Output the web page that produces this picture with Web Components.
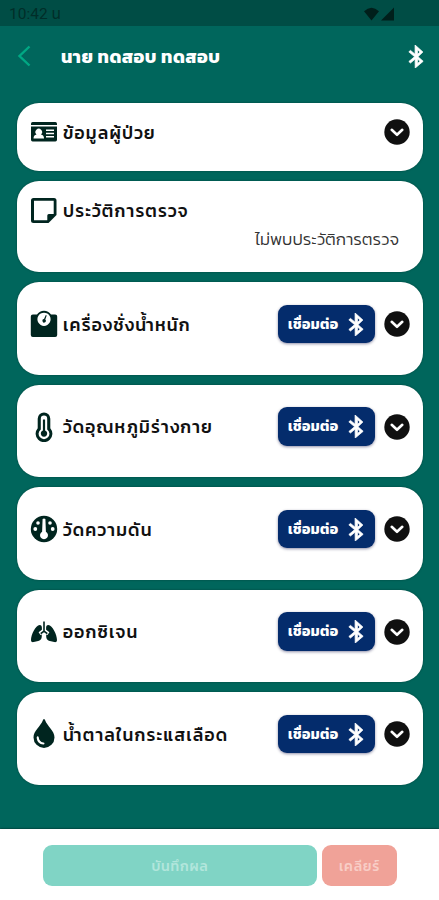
<!DOCTYPE html>
<html lang="th">
<head>
<meta charset="utf-8">
<meta name="viewport" content="width=device-width, initial-scale=1">
<title>Patient</title>
<style>
  body {
    margin: 0;
    font-family: "Kanit", "Noto Sans Thai", "Noto Sans", "Roboto", sans-serif;
  }
</style>
</head>
<body>
<patient-app></patient-app>

<script>
const ICONS = {
  id: `<path fill-rule="evenodd" d="M1 6.700q0-1.700 1.600-1.700h22.800q1.600 0 1.600 1.700v1.300H1zM1 9.500h26v13.300q0 1.700-1.600 1.700H2.600Q1 24.500 1 22.800zM3.500 21.500h10.500q0-3.700-3-4.100a3.300 3.300 0 1 0-4.500 0q-3 .4-3 4.100zM16 12.500v1.600h8v-1.600zM16 15.700v1.600h8v-1.600zM16 18.900v1.600h8v-1.600z"/>`,
  note: `<path fill-rule="evenodd" d="M3.500 2h20.500q2.500 0 2.500 2.500v14.500l-8 8h-15q-2.500 0-2.500-2.500v-20q0-2.500 2.500-2.500zM4 4.800v19.400h13.300v-4.700q0-1.500 1.500-1.500h4.900v-13.200z"/>`,
  scale: `<path fill-rule="evenodd" d="M2.800 5.500h4.200a8.500 8.500 0 0 1 14 0h4.200q2 0 2 2v18.500q0 2-2 2h-22.400q-2 0-2-2v-18.500q0-2 2-2zM14 3.700a6.600 6.600 0 1 0 .01 0z"/><path d="M15.800 6l.9.400-1.400 4.100a1.700 1.700 0 1 1-1.300-.4z"/>`,
  thermometer: `<path fill-rule="evenodd" d="M14 .5a6.300 6.300 0 0 1 6.300 6.300v9.400a8.400 8.400 0 1 1-12.600 0V6.800A6.300 6.300 0 0 1 14 .500zM14 3.600a3.200 3.200 0 0 0-3.200 3.200v10.600a5.400 5.400 0 1 0 6.400 0V6.800A3.200 3.200 0 0 0 14 3.600z"/><path d="M12.900 8q1.100-1.500 2.200 0v10.500a3.200 3.200 0 1 1-2.200 0z"/>`,
  gauge: `<circle cx="14" cy="15" r="13.200"/><g fill="#fff"><path d="M12.600 5q1.400-1.200 2.800 0l.5 12.700a4 4 0 1 1-3.800 0z"/><circle cx="8" cy="9" r="1.800"/><circle cx="20" cy="9" r="1.800"/><circle cx="5.300" cy="15" r="1.900"/><circle cx="22.700" cy="15" r="1.900"/></g>`,
  lungs: `<path d="M13.200 4.500h1.600v9.300l3 2.100-1 1.300-2.800-2-2.800 2-1-1.300 3-2.100zM9.700 8c1.600 0 2.200 1.200 2.200 2.700v2l-3.300 2.600 1.900 2.800 1.200-.7c.5 4-.9 5.900-3.600 6.500l-4.300 1.200C2.200 25.500 1 24.800 1 23c0-5 4.500-15 8.700-15zM18.300 8c-1.600 0-2.200 1.200-2.200 2.700v2l3.300 2.600-1.900 2.800-1.200-.7c-.5 4 .9 5.900 3.600 6.500l4.300 1.200c1.600.4 2.800-.3 2.800-2.100 0-5-4.500-15-8.700-15z"/>`,
  drop: `<path fill-rule="evenodd" d="M13 1q1-2 2 0c2.500 6.600 9.500 10.900 9.500 17.400a10.500 10.500 0 0 1-21 0c0-6.500 7-10.800 9.500-17.400zM6.700 18.200c0 4.500 3 7 6.600 7.300q1.200 0 1.200-1t-1.200-1.100c-2.600-.3-4.400-2.300-4.600-5.200q-.2-1-1-1t-1 1z"/>`
};

const BLUETOOTH = "M196.500 260l92.600-103.300L143.100 0v206.300l-86.100-86.100-31.400 31.400L133.700 260 25.600 368.400 57 399.800l86.100-86.100L145.800 512l148.600-148.600zM237.300 157l-50 50-.3-100.300zM187.400 313l50 50-50.300 50.300z";

class BluetoothIcon extends HTMLElement {
  constructor() {
    super();
    this.attachShadow({ mode: "open" }).innerHTML = `
      <style>
        :host { display: block; flex: none; width: 16px; height: 23px; color: #fff; }
        svg { display: block; width: 100%; height: 100%; }
      </style>
      <svg viewBox="10 0 300 512" fill="currentColor" stroke="currentColor" stroke-width="16" preserveAspectRatio="none"><path fill-rule="evenodd" d="${BLUETOOTH}"/></svg>
    `;
  }
}
customElements.define("bluetooth-icon", BluetoothIcon);

class StatusBar extends HTMLElement {
  constructor() {
    super();
    this.attachShadow({ mode: "open" }).innerHTML = `
      <style>
        :host {
          display: flex;
          justify-content: space-between;
          align-items: center;
          box-sizing: border-box;
          height: 26px;
          padding: 2px 43px 0 9px;
          background: #004d45;
          color: #002e29;
          font: 15.500px/24px Roboto, "Noto Sans Thai", sans-serif;
        }
        svg { display: block; }
      </style>
      <slot></slot>
      <svg width="33" height="14" viewBox="0 0 33 14" fill="#001f1b">
        <path d="M1 4.200Q8.500-2.800 16 4.200L8.500 13.500zM31 .5v13H18z"/>
      </svg>
    `;
  }
}
customElements.define("status-bar", StatusBar);

class AppHeader extends HTMLElement {
  constructor() {
    super();
    this.attachShadow({ mode: "open" }).innerHTML = `
      <style>
        :host {
          display: flex;
          align-items: center;
          box-sizing: border-box;
          height: 60px;
          padding: 0 15px 0 17px;
          color: #fff;
        }
        h1 {
          flex: 1;
          margin: 2px 0 0 29px;
          font-size: 18px;
          font-weight: 700;
          letter-spacing: .5px;
          line-height: 28px;
          white-space: nowrap;
        }
      </style>
      <svg width="15" height="22" viewBox="0 0 15 22" fill="none" stroke="#00a884" stroke-width="2.400">
        <path d="M12.500 1.500L2.500 11l10 9.500"/>
      </svg>
      <h1><slot></slot></h1>
      <bluetooth-icon></bluetooth-icon>
    `;
  }
}
customElements.define("app-header", AppHeader);

class ConnectButton extends HTMLElement {
  constructor() {
    super();
    this.attachShadow({ mode: "open" }).innerHTML = `
      <style>
        :host {
          display: flex;
          flex: none;
          align-items: center;
          justify-content: space-between;
          box-sizing: border-box;
          width: 97.500px;
          height: 38.500px;
          padding: 0 11px 0 10.500px;
          border-radius: 9px;
          background: #042c6c;
          box-shadow: 0 1px 3px rgba(0, 0, 60, .45);
          color: #fff;
          font-size: 14px;
          font-weight: 700;
          letter-spacing: .4px;
          white-space: nowrap;
        }
      </style>
      <slot></slot>
      <bluetooth-icon></bluetooth-icon>
    `;
  }
}
customElements.define("connect-button", ConnectButton);

class PatientCard extends HTMLElement {
  constructor() {
    super();
    this.attachShadow({ mode: "open" });
  }

  connectedCallback() {
    const toggle = this.hasAttribute("plain") ? "" : `
      <svg class="toggle" width="26" height="26" viewBox="0 0 26 26">
        <circle cx="13" cy="13" r="12.700" fill="#101010"/>
        <path d="M7.700 10.800l5.300 5 5.300-5" fill="none" stroke="#fff" stroke-width="2.600" stroke-linecap="round" stroke-linejoin="round"/>
      </svg>`;
    this.shadowRoot.innerHTML = `
      <style>
        :host {
          display: block;
          box-sizing: border-box;
          height: 92.500px;
          padding: 22.500px 13px 0;
          border-radius: 22px;
          background: #fff;
          box-shadow: 0 0 2px rgba(0, 30, 25, .5);
        }
        :host([compact]) { height: 68px; padding-top: 10px; }
        :host([plain]) { height: 91.500px; padding-top: 10.500px; }
        .row { display: flex; align-items: center; height: 39px; }
        .icon { flex: none; margin-right: 5px; fill: #00251f; }
        h2 {
          flex: 1;
          margin: 1px 0 0;
          color: #111;
          font-size: 17.500px;
          font-weight: 500;
          letter-spacing: 1.150px;
          line-height: 30px;
          white-space: nowrap;
        }
        .toggle { flex: none; margin-left: 9px; }
      </style>
      <div class="row">
        <svg class="icon" width="28" height="30" viewBox="0 0 28 30">${ICONS[this.getAttribute("icon")]}</svg>
        <h2>${this.getAttribute("label")}</h2>
        <slot name="action"></slot>
        ${toggle}
      </div>
      <slot></slot>
    `;
  }
}
customElements.define("patient-card", PatientCard);

class FooterButton extends HTMLElement {
  constructor() {
    super();
    this.attachShadow({ mode: "open" }).innerHTML = `
      <style>
        :host {
          display: flex;
          align-items: center;
          justify-content: center;
          box-sizing: border-box;
          height: 41px;
          padding-top: 2px;
          border-radius: 9px;
          font-size: 14px;
          font-weight: 500;
          letter-spacing: .8px;
          white-space: nowrap;
        }
        :host([kind="save"]) { flex: 1; background: #80d4c5; color: #b2e6dc; }
        :host([kind="clear"]) { width: 75px; background: #f0a298; color: #f8cdc6; }
      </style>
      <slot></slot>
    `;
  }
}
customElements.define("footer-button", FooterButton);

class PatientApp extends HTMLElement {
  constructor() {
    super();
    const devices = [
      ["scale", "เครื่องชั่งน้ำหนัก"],
      ["thermometer", "วัดอุณหภูมิร่างกาย"],
      ["gauge", "วัดความดัน"],
      ["lungs", "ออกซิเจน"],
      ["drop", "น้ำตาลในกระแสเลือด"]
    ];
    this.attachShadow({ mode: "open" }).innerHTML = `
      <style>
        :host {
          display: flex;
          flex-direction: column;
          height: 900px;
          overflow: hidden;
          background: #00665c;
        }
        main {
          display: flex;
          flex: 1;
          flex-direction: column;
          gap: 10px;
          padding: 16.500px 16px 0 17px;
        }
        .empty {
          margin: -1px 0 0;
          padding-right: 11px;
          color: #333;
          font-size: 16.800px;
          font-weight: 300;
          line-height: 22px;
          text-align: right;
        }
        footer {
          display: flex;
          gap: 5px;
          box-sizing: border-box;
          height: 71px;
          padding: 16px 42px 0 43px;
          background: #fff;
          box-shadow: 0 0 2px rgba(0, 0, 0, .7);
        }
      </style>
      <status-bar>10:42 น</status-bar>
      <app-header>นาย ทดสอบ ทดสอบ</app-header>
      <main>
        <patient-card compact icon="id" label="ข้อมูลผู้ป่วย"></patient-card>
        <patient-card plain icon="note" label="ประวัติการตรวจ">
          <p class="empty">ไม่พบประวัติการตรวจ</p>
        </patient-card>
        ${devices.map(([icon, label]) => `
          <patient-card icon="${icon}" label="${label}">
            <connect-button slot="action">เชื่อมต่อ</connect-button>
          </patient-card>`).join("")}
      </main>
      <footer>
        <footer-button kind="save">บันทึกผล</footer-button>
        <footer-button kind="clear">เคลียร์</footer-button>
      </footer>
    `;
  }
}
customElements.define("patient-app", PatientApp);
</script>
</body>
</html>
